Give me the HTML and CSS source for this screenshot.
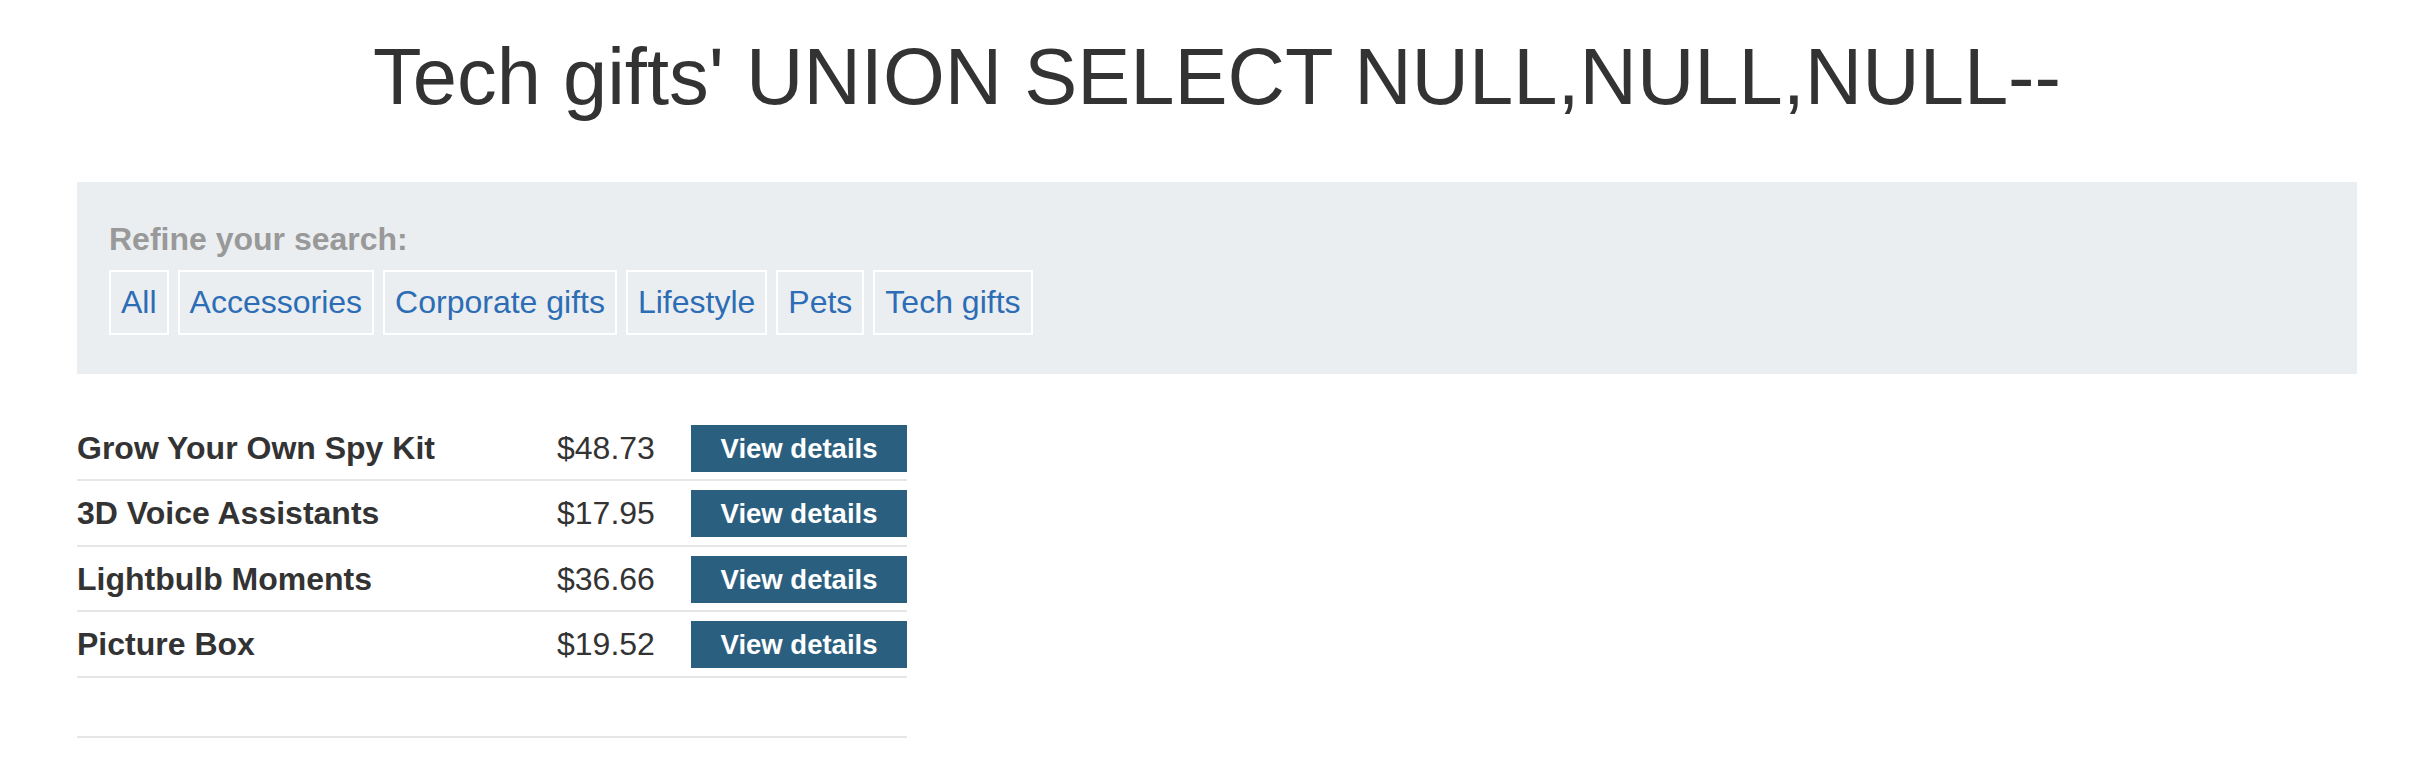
FILE: index.html
```html
<!DOCTYPE html>
<html lang="en">
<head>
<meta charset="utf-8">
<title>Tech gifts</title>
<link rel="stylesheet" href="styles.css">
</head>
<body>
<div class="page">
  <h1 class="title">Tech gifts' UNION SELECT NULL,NULL,NULL--</h1>
  <section class="filters">
    <div class="filters-label">Refine your search:</div>
    <div class="filters-list">
      <a class="filter" href="#">All</a>
      <a class="filter" href="#">Accessories</a>
      <a class="filter" href="#">Corporate gifts</a>
      <a class="filter" href="#">Lifestyle</a>
      <a class="filter" href="#">Pets</a>
      <a class="filter" href="#">Tech gifts</a>
    </div>
  </section>
  <div class="products">
    <div class="row">
      <div class="name">Grow Your Own Spy Kit</div>
      <div class="price">$48.73</div>
      <div class="action"><a class="button" href="#">View details</a></div>
    </div>
    <div class="row">
      <div class="name">3D Voice Assistants</div>
      <div class="price">$17.95</div>
      <div class="action"><a class="button" href="#">View details</a></div>
    </div>
    <div class="row">
      <div class="name">Lightbulb Moments</div>
      <div class="price">$36.66</div>
      <div class="action"><a class="button" href="#">View details</a></div>
    </div>
    <div class="row">
      <div class="name">Picture Box</div>
      <div class="price">$19.52</div>
      <div class="action"><a class="button" href="#">View details</a></div>
    </div>
    <div class="row row-empty">
      <div class="name"></div>
      <div class="price"></div>
      <div class="action"></div>
    </div>
  </div>
</div>
</body>
</html>
```

FILE: styles.css
```css
html, body {
  margin: 0;
  padding: 0;
  background: #ffffff;
}

body {
  font-family: "Liberation Sans", Arial, sans-serif;
  color: #333333;
  font-size: 32px;
}

.page {
  padding: 0 75px 0 77px;
}

.title {
  margin: 0;
  padding-top: 31px;
  font-size: 79.5px;
  line-height: 92px;
  font-weight: 400;
  text-align: center;
  color: #333333;
}

.filters {
  margin-top: 59px;
  background: #ebeef1;
  padding: 35px 32px 39px;
}

.filters-label {
  font-weight: 700;
  color: #999999;
  line-height: 44.8px;
}

.filters-list {
  display: flex;
  flex-wrap: wrap;
  gap: 9px;
  margin-top: 8px;
}

.filter {
  display: block;
  border: 2px solid #ffffff;
  padding: 8px 10px;
  line-height: 44.8px;
  color: #2c6db5;
  text-decoration: none;
}

.products {
  margin-top: 42px;
  width: 830px;
}

.row {
  display: grid;
  grid-template-columns: 480px 134px 216px;
  align-items: center;
  padding: 9px 0 7.5px;
  border-bottom: 2px solid #e6e6e6;
  line-height: 44.8px;
}

.row-empty {
  height: 42px;
}

.name {
  font-weight: 700;
  color: #333333;
}

.price {
  color: #333333;
}

.button {
  display: block;
  background: #2b5f80;
  color: #ffffff;
  font-weight: 700;
  font-size: 27.5px;
  line-height: 31px;
  padding: 8px 0;
  text-align: center;
  text-decoration: none;
}
```
